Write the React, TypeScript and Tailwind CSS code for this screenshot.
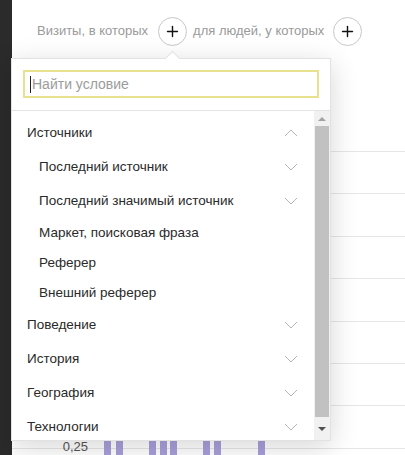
import { Plus } from 'lucide-react'

type Item = {
  label: string
  sub?: boolean
  chevron?: 'up' | 'down'
}

const items: Item[] = [
  { label: 'Источники', chevron: 'up' },
  { label: 'Последний источник', sub: true, chevron: 'down' },
  { label: 'Последний значимый источник', sub: true, chevron: 'down' },
  { label: 'Маркет, поисковая фраза', sub: true },
  { label: 'Реферер', sub: true },
  { label: 'Внешний реферер', sub: true },
  { label: 'Поведение', chevron: 'down' },
  { label: 'История', chevron: 'down' },
  { label: 'География', chevron: 'down' },
  { label: 'Технологии', chevron: 'down' },
]

const bars = [105, 117, 150, 161, 171, 204, 215, 259]

const Chevron = ({ dir }: { dir: 'up' | 'down' }) => (
  <svg width="14" height="8" viewBox="0 0 14 8" className="shrink-0">
    <path
      d={dir === 'up' ? 'M1 7 L7 1 L13 7' : 'M1 1 L7 7 L13 1'}
      fill="none"
      stroke="#b5b5b5"
      strokeWidth="1"
    />
  </svg>
)

const PlusButton = () => (
  <div className="w-[29px] h-[29px] rounded-full border border-[#c8c8c8] flex items-center justify-center bg-white">
    <Plus className="w-[17px] h-[17px] text-[#111]" strokeWidth={2} />
  </div>
)

const App = () => {
  return (
    <div className="w-[405px] h-[455px] relative overflow-hidden bg-white flex font-['Liberation_Sans',Arial,sans-serif]">
      <div className="w-[12px] bg-[#2b2b2b] shrink-0" />

      {/* page underneath */}
      <div className="flex-1 flex flex-col">
        <div className="h-[62px] shrink-0 flex items-center pl-[25px] text-[13px] text-[#9a9a9a]">
          <span>Визиты, в которых</span>
          <div className="ml-[10px]">
            <PlusButton />
          </div>
          <span className="ml-[6px]">для людей, у которых</span>
          <div className="ml-[9px]">
            <PlusButton />
          </div>
        </div>
        <div className="h-[89px] shrink-0" />
        <div className="flex flex-col shrink-0">
          {[0, 1, 2, 3, 4, 5, 6].map((i) => (
            <div key={i} className="h-[42.4px] shrink-0 border-t border-[#e6e6e6]" />
          ))}
        </div>
        <div className="flex h-[20px] shrink-0 border-t border-[#e6e6e6]">
          <div className="w-[76px] text-right text-[13px] text-[#555] leading-[16px] -mt-[10px]">0,25</div>
          <div className="relative flex-1">
            {bars.map((x) => (
              <div
                key={x}
                className="absolute -top-[8px] h-[20px] w-[7px] bg-[#a99fdb]"
                style={{ left: x - 89 }}
              />
            ))}
          </div>
        </div>
      </div>

      {/* dropdown */}
      <div className="absolute left-[11px] top-[58px] w-[320px] h-[383px] bg-white border border-[#e2e2e2] shadow-[0_6px_26px_rgba(0,0,0,0.16)] flex flex-col">
        <div className="absolute -top-[6px] left-[155px] w-[11px] h-[11px] rotate-45 bg-white border-l border-t border-[#e2e2e2]" />
        <div className="px-[11px] pt-[11px] pb-[12px] relative">
          <div className="h-[28px] border-2 border-[#e8e28f] flex items-center pl-[5px] text-[14px] text-[#9c9c9c]">
            <span className="w-[1px] h-[17px] bg-[#222] mr-[1px]" />
            Найти условие
          </div>
        </div>
        <div className="border-t border-[#e4e4e4] flex-1 flex overflow-hidden">
          <div className="flex-1 pt-[5px] overflow-hidden">
            {items.map((it) => (
              <div
                key={it.label}
                className={`flex items-center justify-between pr-[16px] text-[13.5px] text-[#2a2a2a] ${
                  it.chevron ? 'h-[34px]' : 'h-[30px]'
                } ${it.sub ? 'pl-[27px]' : 'pl-[15px]'}`}
              >
                <span>{it.label}</span>
                {it.chevron && <Chevron dir={it.chevron} />}
              </div>
            ))}
          </div>
          <div className="w-[16px] bg-[#f1f1f1] flex flex-col items-center">
            <div className="h-[15px] flex items-center justify-center">
              <div className="w-0 h-0 border-l-[4px] border-r-[4px] border-b-[4px] border-l-transparent border-r-transparent border-b-[#a3a3a3]" />
            </div>
            <div className="w-[14px] h-[291px] bg-[#c1c1c1]" />
            <div className="flex-1 flex items-center justify-center">
              <div className="w-0 h-0 border-l-[4px] border-r-[4px] border-t-[4px] border-l-transparent border-r-transparent border-t-[#505050]" />
            </div>
          </div>
        </div>
      </div>
    </div>
  )
}

export default App
